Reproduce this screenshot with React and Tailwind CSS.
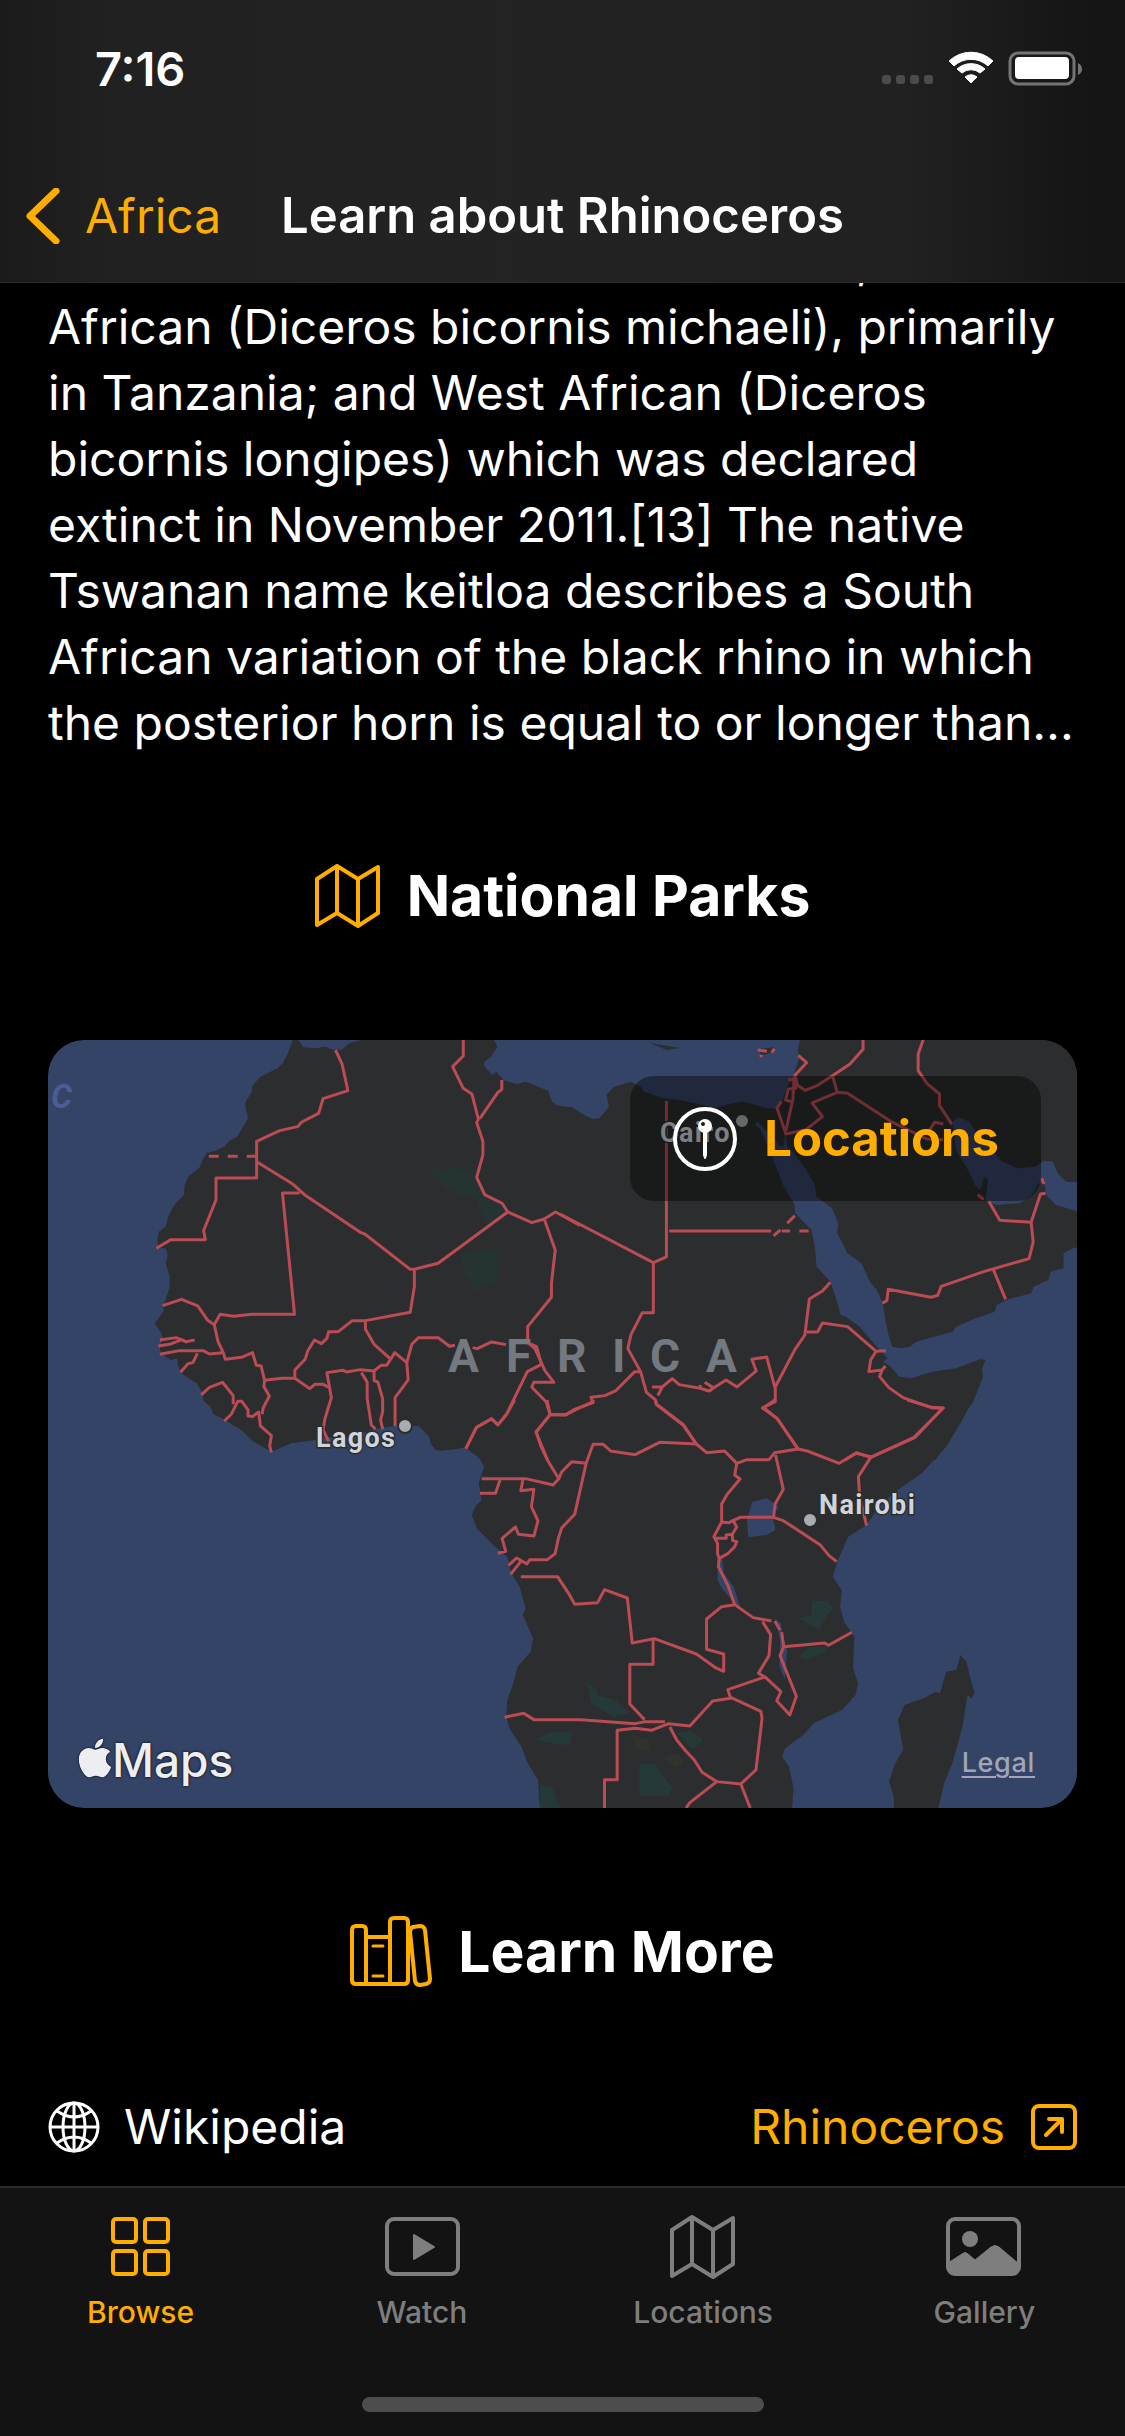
import React from "react";
import { FaApple } from "react-icons/fa";

const paragraph = [
  "African (Diceros bicornis michaeli), primarily",
  "in Tanzania; and West African (Diceros",
  "bicornis longipes) which was declared",
  "extinct in November 2011.[13] The native",
  "Tswanan name keitloa describes a South",
  "African variation of the black rhino in which",
  "the posterior horn is equal to or longer than...",
];

function ChevronIcon() {
  return (
    <svg width="34" height="56" viewBox="0 0 34 56" fill="none" stroke="currentColor" strokeWidth="7" strokeLinecap="round" strokeLinejoin="round" aria-hidden="true">
      <path d="M30 3 L4 28 L30 53" />
    </svg>
  );
}

function MapIcon({ className, stroke = 4 }) {
  return (
    <svg className={className} viewBox="0 0 66 64" fill="none" stroke="currentColor" strokeWidth={stroke} strokeLinejoin="round" aria-hidden="true">
      <path d="M2 15 L22 2 L43 15 L63 3 V49 L43 62 L22 49 L2 61 Z M22 2 V49 M43 15 V62" />
    </svg>
  );
}

function BooksIcon() {
  return (
    <svg width="82" height="72" viewBox="0 0 82 72" fill="none" stroke="currentColor" strokeWidth="4" strokeLinecap="round" strokeLinejoin="round" aria-hidden="true">
      <path d="M16 68 V14 Q16 10 12 10 H6 Q2 10 2 14 V64 Q2 68 6 68 H54 Q58 68 58 64 V6 Q58 2 54 2 H44 Q40 2 40 6 V68 M16 21 H40" />
      <path d="M23 30 H33 M23 60 H33" strokeWidth="3" />
      <path d="M60 16 Q60 12 63 11 L70 10 Q74 10 75 14 L80 63 Q80 67 76 68 L70 69 Q66 69 65 65 Z" />
    </svg>
  );
}

function GlobeIcon() {
  return (
    <svg width="52" height="52" viewBox="0 0 52 52" fill="none" stroke="currentColor" strokeWidth="3" aria-hidden="true">
      <circle cx="26" cy="26" r="24" />
      <ellipse cx="26" cy="26" rx="11" ry="24" />
      <path d="M26 2 V50 M2 26 H50 M9 10 Q26 22 43 10 M9 42 Q26 30 43 42" />
    </svg>
  );
}

function ArrowSquareIcon() {
  return (
    <svg width="46" height="46" viewBox="0 0 46 46" fill="none" stroke="currentColor" strokeWidth="4" strokeLinecap="round" strokeLinejoin="round" aria-hidden="true">
      <rect x="2" y="2" width="42" height="42" rx="6" />
      <path d="M15 31 L31 15 M18 15 H31 V28" />
    </svg>
  );
}

function PinCircleIcon() {
  return (
    <svg width="66" height="66" viewBox="0 0 66 66" fill="none" aria-hidden="true">
      <circle cx="33" cy="33" r="30" stroke="#fff" strokeWidth="4" />
      <path d="M32 25 H34 V49 L33 52 L32 49 Z" fill="#fff" stroke="#fff" strokeWidth="2" strokeLinejoin="round" />
      <circle cx="33" cy="20" r="7" fill="#fff" />
      <circle cx="31" cy="18" r="2" fill="#1a1b1c" />
    </svg>
  );
}

function GridIcon() {
  return (
    <svg className="h-[60px] w-[60px]" viewBox="0 0 60 60" fill="none" stroke="currentColor" strokeWidth="4" aria-hidden="true">
      <rect x="2" y="2" width="23" height="23" rx="3" />
      <rect x="34" y="2" width="23" height="23" rx="3" />
      <rect x="2" y="34" width="23" height="23" rx="3" />
      <rect x="34" y="34" width="23" height="23" rx="3" />
    </svg>
  );
}

function PlayIcon() {
  return (
    <svg className="h-[60px] w-[76px]" viewBox="0 0 76 60" fill="none" stroke="currentColor" strokeWidth="4" aria-hidden="true">
      <rect x="3" y="2" width="71" height="55" rx="7" />
      <path d="M30 18 V42 L50 30 Z" fill="currentColor" strokeWidth="2" strokeLinejoin="round" />
    </svg>
  );
}

function PhotoIcon() {
  return (
    <svg className="h-[60px] w-[76px]" viewBox="0 0 76 60" fill="none" stroke="currentColor" aria-hidden="true">
      <rect x="2" y="2" width="71" height="55" rx="7" strokeWidth="4" />
      <circle cx="24" cy="22" r="8" fill="currentColor" stroke="none" />
      <path d="M2 46 L16 37 Q19 34 22 37 L29 43 L45 30 Q49 27 53 30 L73 47 V52 Q73 57 67 57 H8 Q2 57 2 52 Z" fill="currentColor" />
    </svg>
  );
}

function StatusIcons() {
  return (
    <svg width="200" height="36" viewBox="0 0 200 36" fill="none" aria-hidden="true">
      <g fill="#4b4b4b">
        <rect x="0" y="24" width="9" height="9" rx="3" />
        <rect x="14" y="24" width="9" height="9" rx="3" />
        <rect x="28" y="24" width="9" height="9" rx="3" />
        <rect x="42" y="24" width="9" height="9" rx="3" />
      </g>
      <g transform="translate(66 0)" fill="#fff" stroke="#fff" strokeWidth="1" strokeLinejoin="round">
        <path d="M1 10 A32 32 0 0 1 45 10 L40 15 A25 25 0 0 0 6 15 Z" />
        <path d="M9 18 A21 21 0 0 1 37 18 L32 22 A14 14 0 0 0 14 22 Z" />
        <path d="M17 26 A10 10 0 0 1 29 26 L23 32 Z" />
      </g>
      <rect x="128" y="2" width="64" height="31" rx="8" stroke="#747474" strokeWidth="3" />
      <rect x="133" y="6" width="54" height="22" rx="4" fill="#fff" />
      <path d="M196 12 Q200 14 200 18 Q200 22 196 24 Z" fill="#747474" />
    </svg>
  );
}

/* Borders are grouped by sector, each with its own survey grid. */
const bordersWest = [
  "M858 60 L877 102 L894 182 L822 206 L809 250 L760 276 L748 290 L696 302 L629 334 V444 H511 V510 L475 602 L480 629 H380 L338 655",
  "M629 395 L735 463 L768 494 L932 608 L943 612 L1075 718 H1087 L1156 700 L1358 546 L1342 520 L1291 494 L1268 442 L1286 375 V334 L1268 278 L1273 268 L1254 192 L1229 175 L1198 110 L1229 78 V28",
  "M1341 150 V178 L1329 188 L1277 266",
  "M754 489 H704 L739 853 H615 L562 859 L523 853 L506 884 L487 871 L458 828 L411 808 L356 827",
  "M506 884 L517 935 L533 970 L538 988 L585 982 L617 968 L628 1006 L642 1008 L652 1051 L703 1045 H740 V1020 L770 988 L777 964 L797 930 L817 941 L833 925 L838 905 H866 L907 872 H945 L1075 847 L1087 770 V718",
  "M348 930 L395 923 L425 935 L449 930 M344 948 L380 942 L410 930 L428 937 M348 973 L405 962 H474 L492 972 L530 968",
  "M457 970 L444 998 L430 1001 L408 1027 M468 1095 L492 1072 L530 1057 L561 1097 V1123",
  "M535 1173 L556 1152 L574 1114 H586 L604 1140 V1158 L617 1160 L635 1146 L640 1188 L672 1217 L667 1248 L672 1267",
  "M645 1153 L648 1134 L666 1098 L650 1070 L652 1051 M740 1045 L783 1076 L798 1063 H822 L837 1072",
  "M838 1234 L822 1200 L827 1168 L846 1103 L833 1028 L880 1021 L890 1026 L930 1019 L970 1023 L990 1006 H1007 L1030 968 L1065 998 L1069 1050 L1031 1103 V1188",
  "M933 1028 L950 1056 V1105 L962 1185 L974 1197 M970 1023 V1052 L981 1056 L995 1107 V1145 L989 1170 L995 1198",
  "M1019 988 L971 944 L945 898 V872 M1065 998 L1080 942 L1099 923 H1156 L1189 949 L1205 946 M1256 953 L1270 956 L1311 936 L1353 944 M1415 938 L1442 950 L1456 1003 L1415 1025 L1356 1150 L1330 1185 L1311 1166 L1268 1192 L1236 1256",
  "M1358 546 L1428 578 L1464 567 L1497 546 L1568 586 M1464 567 L1496 660 L1485 760 V802 L1416 890 V938 L1437 955 L1466 1022 L1492 1057 H1434 L1428 1072 L1470 1116 L1481 1154 H1527 L1568 1132 M1481 1154 L1440 1206 L1474 1290",
];

const bordersEast = [
  "M0 552 L271 698 V848 H239 L206 914 L197 956 L234 1025 L251 1087 L277 1110 L280 1124 L358 1186 L397 1244",
  "M271 698 L309 681 V213 M317 603 H613 M644 603 H668 M695 603 H722 M620 618 L640 600 M660 580 L682 557",
  "M0 1154 H17 L43 1140 L95 1116 L90 1102 L130 1097 L161 1083 L217 1025 H234",
  "M267 1071 H297 L284 1097 M297 1071 L326 1046 L346 1064 L407 1075 L432 1083 L482 1050 L514 1071 L570 1023 L557 988 L600 981 L625 1076 V1115 L588 1134 L631 1166 L660 1210 L691 1257 M420 1057 L445 1073 L434 1084 M407 1065 V1078",
  "M625 1071 L682 959 L711 915 L724 807 L762 783 L785 757 M717 906 H748 L762 879 L835 890 L918 964 L946 962 M918 964 L902 990 L897 1025 L935 1020 L945 1008 M935 1020 L928 1040 L955 1073 L996 1103 L1080 1134 H1113 L1028 1222 L905 1281 L860 1270 L828 1290",
  "M936 820 L949 812 L953 778 L1077 802 L1097 796 L1107 769 L1230 725 L1362 686 L1374 636 L1368 577 L1277 571 L1245 514 M1368 577 L1395 492 L1410 490 M1405 462 L1399 445 M1258 718 L1294 808 M1213 494 L1230 508",
  "M880 28 V58 L842 102 L791 137 L748 166 L711 181 L690 166 L682 136 L716 98 L692 76",
  "M791 137 L805 187 L732 219 L762 260 L714 299 L656 312 L630 234 L643 214",
  "M656 302 L668 245 L676 210 L680 140 M663 149 H685 V175 L663 177 L655 210 L674 216",
  "M805 187 L835 190 L960 274 L1065 327 L1112 329 M1065 312 L1088 277 L1113 282",
  "M1055 28 L1040 72 V122 L1066 161 L1102 192 V227 L1138 283 M574 60 L601 64 M584 74 V82 M615 68 L622 56",
];

const bordersSouth = [
  "M183 0 L162 45 L142 74 L126 57 L89 82 L64 145 M262 0 L270 44 H309 L330 28 L375 8 V0 M270 44 L236 96 L246 135 L263 180 L291 236 L277 255 L210 236 H102",
  "M291 236 L298 216 L323 185 L358 190 L375 133 H400 L418 153 L478 164 L538 127 L628 132 L653 158 L697 153 L727 190 L752 179 L806 179 L820 158 L877 147 L900 153 L978 190 L1020 158 L1055 172 L1163 113 L1232 24 L1205 22 L1145 0",
  "M528 0 L530 12 L597 75 L628 132 M820 0 L793 23 L826 56 L877 147 M1055 172 L1025 230 L1028 290 L1045 377 M822 165 L841 268 L821 312 L817 352 L841 362 L931 434 L953 467 L972 485",
  "M817 352 H735 L708 368 L690 366 V312 L703 284 L735 237 L722 225 L727 190 M690 366 L671 410 L680 430 V462 L684 475 L682 500 L706 558 L722 614 L767 653 L812 663",
  "M716 358 L727 381 L716 403 L701 405 V415 H671 M716 403 L717 422 L727 425 L722 440 L706 460 L684 475",
  "M98 280 H136 L147 240 M203 240 L198 272 L230 268 L224 320 L240 363 L230 408 L192 403 L185 381 L152 415 L161 454 L142 460",
  "M358 190 L330 343 L298 384 L290 415 L282 461 L263 479 H220 L213 492 L188 474 L168 496 M198 484 L173 523 M198 530 H288 L315 580 L330 613 L386 608 L403 569 L459 594 L471 729 L525 716 L628 762 L676 804 L695 814 V762 L653 748 V657 L690 620 L722 614",
  "M522 716 V793 H465 V912 L501 959 M158 952 L205 940 L230 959 H345 L478 971 L503 965 H551 M403 1224 V1139 H434 V991 L478 985 L518 991 L560 971 L612 978 L668 903 L712 895 L705 869 L796 831 L780 820 L806 767 L810 704 L790 665",
  "M796 831 L835 875 L825 902 L857 945 L873 889 L833 767 L842 740 L837 697 M820 663 L833 690 M842 740 L942 729 L952 736 L1009 697",
  "M712 892 L786 934 L789 955 L774 1110 L737 1152 L678 1145 L642 1117 L623 1080 L600 1050 L580 1020 L563 981 M678 1145 L612 1208 L603 1224 M737 1152 L760 1224",
];

function Borders({ lines }) {
  return (
    <g fill="none" stroke="#bb4b55" strokeWidth="3" strokeLinejoin="round">
      {lines.map((d) => (
        <path key={d} d={d} vectorEffect="non-scaling-stroke" />
      ))}
    </g>
  );
}

function AfricaMap() {
  return (
    <svg className="block h-auto w-full" viewBox="0 0 1029 768" role="img" aria-label="Map of Africa">
      <rect width="1029" height="768" fill="#344466" />
      <g transform="translate(-8 -10) scale(.3444 .3333)">
        <path fill="#2b2d2e" d="M735 28 L720 70 705 100 690 115 640 140 617 167 615 185 597 215 597 235 604 265 590 290 572 320 550 332 535 350 510 362 485 368 475 385 462 415 432 437 420 465 418 495 390 525 372 560 365 590 345 605 341 630 345 655 365 655 371 675 365 700 377 740 376 775 357 830 360 843 333 880 350 905 357 925 348 950 350 970 380 990 398 985 402 1010 410 1030 455 1060 470 1085 475 1112 495 1130 503 1152 535 1168 560 1185 585 1200 620 1235 672 1265 730 1240 800 1230 822 1222 900 1222 970 1198 1030 1188 1100 1188 1130 1220 1135 1243 1150 1262 1190 1260 1235 1253 1260 1270 1280 1290 1568 1290 1568 240 1500 225 1487 215 1475 182 1440 167 1410 155 1385 162 1345 150 1325 125 1313 135 1290 108 1290 95 1310 80 1328 50 1318 28 945 28 900 38 875 60 845 58 830 50 800 55 765 52 748 28Z" />
        <path fill="#253433" d="M1122 425 L1160 413 1177 425 1190 407 1212 420 1265 420 1272 450 1291 494 1342 520 1355 546 1300 582 1278 540 1265 500 1225 498 1200 478 1180 480 1150 440Z M1220 668 L1265 660 1328 658 V755 L1285 770 1264 790 1250 750 1235 735Z" />
      </g>
      <g transform="translate(512 -10) scale(.3444 .3333)">
        <path fill="#2b2d2e" d="M0 28 H1568 V1290 H0Z" />
        <path fill="#344466" d="M0 28 L0 228 35 232 70 255 95 267 115 265 142 230 135 195 155 172 205 155 235 170 245 185 300 205 345 210 405 222 450 235 490 222 530 215 570 225 600 235 632 235 645 215 660 170 680 130 695 85 690 60 697 28Z" />
        <path fill="#344466" d="M565 285 L580 295 600 340 620 390 650 470 680 520 683 550 730 600 740 650 745 710 785 755 800 800 815 855 830 860 870 890 920 950 952 985 938 995 960 1010 985 1040 1020 1045 1080 1025 1150 1015 1220 988 1235 990 1225 1020 1228 1040 1215 1075 1200 1115 1155 1180 1130 1230 1090 1290 1568 1290 1568 635 1490 655 1462 670 1462 715 1425 725 1418 750 1375 770 1368 790 1300 808 1268 825 1262 845 1200 868 1150 890 1140 905 1085 920 1035 935 1015 950 990 955 965 950 955 920 945 870 937 820 920 780 900 755 875 700 835 670 805 610 808 580 790 535 745 500 740 465 715 420 680 370 660 350 655 310 648 350 635 345 605 310 575 275Z" />
        <path fill="#344466" d="M1140 275 L1155 262 1190 275 1210 310 1240 345 1285 395 1330 415 1380 410 1405 392 1432 395 1445 430 1470 455 1520 458 1520 550 1440 525 1412 495 1405 455 1390 460 1370 495 1335 520 1265 525 1235 510 1243 450 1232 440 1220 480 1205 465 1190 430 1150 360Z" />
        <path fill="#2b2d2e" d="M258 38 L300 46 350 54 310 60Z M575 58 L622 52 610 68 585 76Z" />
      </g>
      <g transform="translate(392 360) scale(.4082 .3333)">
        <path fill="#2b2d2e" d="M0 152 L20 147 60 140 75 155 95 170 108 200 95 250 102 300 88 318 78 345 90 385 130 435 165 470 175 520 195 560 210 625 203 645 228 715 222 755 190 800 180 850 165 900 162 950 172 990 200 1040 215 1090 240 1140 245 1230 862 1230 866 1165 855 1100 838 1070 845 1045 890 1005 915 970 985 930 1018 885 1024 850 1012 805 1015 710 990 665 980 620 984 570 962 530 975 480 1000 410 1045 375 1070 330 1110 280 1180 220 1240 140 1275 70 1305 0 0 0Z" />
        <path fill="#2b2d2e" d="M1275 765 L1290 785 1300 840 1310 880 1302 895 1292 885 1280 980 1255 1090 1235 1150 1220 1230 1112 1230 1112 1190 1100 1145 1115 1090 1135 1050 1122 960 1138 915 1185 895 1215 875 1225 880 1240 815 1265 810Z" />
        <path fill="#344466" d="M765 305 L800 295 830 320 815 350 822 390 800 405 755 412 752 360Z M680 455 L692 480 695 520 720 560 730 600 737 628 715 600 690 565 680 540Z M822 657 L835 670 842 720 850 750 845 838 832 800 833 720Z" />
        <path fill="#253a38" d="M360 850 L382 865 385 885 430 900 465 940 425 950 370 910Z M910 602 H950 L965 625 945 650 930 690 880 655 910 645Z M880 770 L900 742 955 738 940 760 895 780Z M236 1020 L265 997 322 995 V1030 L300 1035Z M580 1000 L612 992 646 1020 620 1048Z M488 1092 L525 1090 570 1165 560 1188 H488Z M245 1155 L275 1160 285 1200 300 1230 245 1230Z" />
        <path fill="#32322c" d="M466 1000 L512 1020 514 1050 480 1050Z M548 1075 L585 1060 595 1085 580 1105Z" />
      </g>
      <g transform="translate(-8 -10) scale(.3444 .3333)">
        <Borders lines={bordersWest} />
        <path d="M490 379 H629" fill="none" stroke="#bb4b55" strokeWidth="3" strokeDasharray="10 9" vectorEffect="non-scaling-stroke" />
      </g>
      <g transform="translate(512 -10) scale(.3444 .3333)">
        <Borders lines={bordersEast} />
      </g>
      <g transform="translate(392 360) scale(.4082 .3333)">
        <Borders lines={bordersSouth} />
      </g>
      <g fontFamily="Roboto, 'Noto Sans', sans-serif" fontWeight="700">
        <text x="400 458 509 564 602 658" y="332" fontSize="46" fill="#74787f">AFRICA</text>
        <text x="3" y="68" fontSize="33" fontStyle="italic" fill="#4a5d94">C</text>
        <g fontSize="27" fill="#d0d4dc" stroke="#2b2d2e" strokeWidth="3" paintOrder="stroke" className="tracking-wider">
          <text x="268" y="407">Lagos</text>
          <text x="771" y="474">Nairobi</text>
          <text x="612" y="102">Cairo</text>
        </g>
        <g fill="#a9acb1" stroke="#2b2d2e" strokeWidth="2">
          <circle cx="357" cy="386" r="7" />
          <circle cx="762" cy="480" r="7" />
          <circle cx="694" cy="81" r="7" />
        </g>
      </g>
    </svg>
  );
}

const tabs = [
  { label: "Browse", icon: <GridIcon />, active: true },
  { label: "Watch", icon: <PlayIcon /> },
  { label: "Locations", icon: <MapIcon className="h-[64px] w-[66px]" stroke={4} /> },
  { label: "Gallery", icon: <PhotoIcon /> },
];

function SectionHeading({ icon, children }) {
  return (
    <h2 className="flex h-[84px] items-center justify-center gap-[26px] text-[57px] font-bold">
      <span className="text-[#ffae00]">{icon}</span>
      {children}
    </h2>
  );
}

export default function App() {
  return (
    <div className="flex min-h-screen flex-col overflow-hidden bg-black font-[Inter,sans-serif] text-white">
      <header className="relative z-10 border-b border-[#2a2a2a] bg-[linear-gradient(90deg,#1b1b1b_0%,#212121_10%,#232323_45%,#212121_80%,#151515_97%)]">
        <div className="flex h-[150px] items-start justify-between pt-[41px] pr-[43px] pl-[95px]">
          <time className="text-[47px] leading-[56px] font-semibold">7:16</time>
          <span className="pt-[10px]"><StatusIcons /></span>
        </div>
        <nav className="grid h-[132px] grid-cols-[1fr_auto_1fr] items-center px-[26px] text-[49px]">
          <button type="button" className="flex items-center gap-[25px] justify-self-start text-[48px] text-[#ffae00]">
            <ChevronIcon />
            Africa
          </button>
          <h1 className="font-semibold">Learn about Rhinoceros</h1>
          <span />
        </nav>
      </header>

      <main className="-mt-[55px] flex-1 px-[48px] pb-[26px]">
        <p className="text-[48px] leading-[66px] whitespace-nowrap">
          <span className="block pl-[808px]">,</span>
          {paragraph.map((line) => (
            <span key={line} className="block">{line}</span>
          ))}
        </p>

        <section className="mt-[98px]">
          <SectionHeading icon={<MapIcon className="h-[64px] w-[66px]" />}>National Parks</SectionHeading>
          <div className="relative mt-[102px] overflow-hidden rounded-[36px]">
            <AfricaMap />
            <button type="button" className="absolute top-[36px] right-[36px] flex h-[125px] items-center gap-[26px] rounded-[24px] bg-black/40 px-[42px] text-[49px] font-bold text-[#ffae00]">
              <PinCircleIcon />
              Locations
            </button>
            <div className="absolute bottom-[18px] left-[30px] flex items-center text-[46px] leading-[60px] font-medium text-[#edeef2] [text-shadow:0_0_3px_#000]">
              <FaApple className="mb-[4px] h-[44px] w-[34px] drop-shadow-[0_0_1px_#000]" aria-hidden="true" />
              Maps
            </div>
            <a href="#legal" className="absolute right-[42px] bottom-[29px] text-[27px] leading-[32px] font-medium tracking-wide text-[#a0a6b6] underline decoration-2 underline-offset-4">Legal</a>
          </div>
        </section>

        <section className="mt-[102px]">
          <SectionHeading icon={<BooksIcon />}>Learn More</SectionHeading>
          <div className="mt-[100px] flex h-[66px] items-center justify-between text-[48px]">
            <span className="flex items-center gap-[24px]">
              <GlobeIcon />
              Wikipedia
            </span>
            <a href="#rhinoceros" className="flex items-center gap-[26px] text-[#ffae00]">
              Rhinoceros
              <ArrowSquareIcon />
            </a>
          </div>
        </section>
      </main>

      <footer className="border-t-2 border-[#2a2a2a] bg-[#131313]">
        <nav className="grid grid-cols-4 pt-[26px]">
          {tabs.map((tab) => (
            <button
              key={tab.label}
              type="button"
              className={`flex flex-col items-center gap-[12px] text-[30px] leading-[40px] font-medium ${tab.active ? "text-[#ffae00]" : "text-[#7e7e7e]"}`}
            >
              <span className="flex h-[66px] items-center justify-center">{tab.icon}</span>
              {tab.label}
            </button>
          ))}
        </nav>
        <div className="mx-auto mt-[65px] mb-[24px] h-[15px] w-[402px] rounded-full bg-[#4d4d4d]" />
      </footer>
    </div>
  );
}
